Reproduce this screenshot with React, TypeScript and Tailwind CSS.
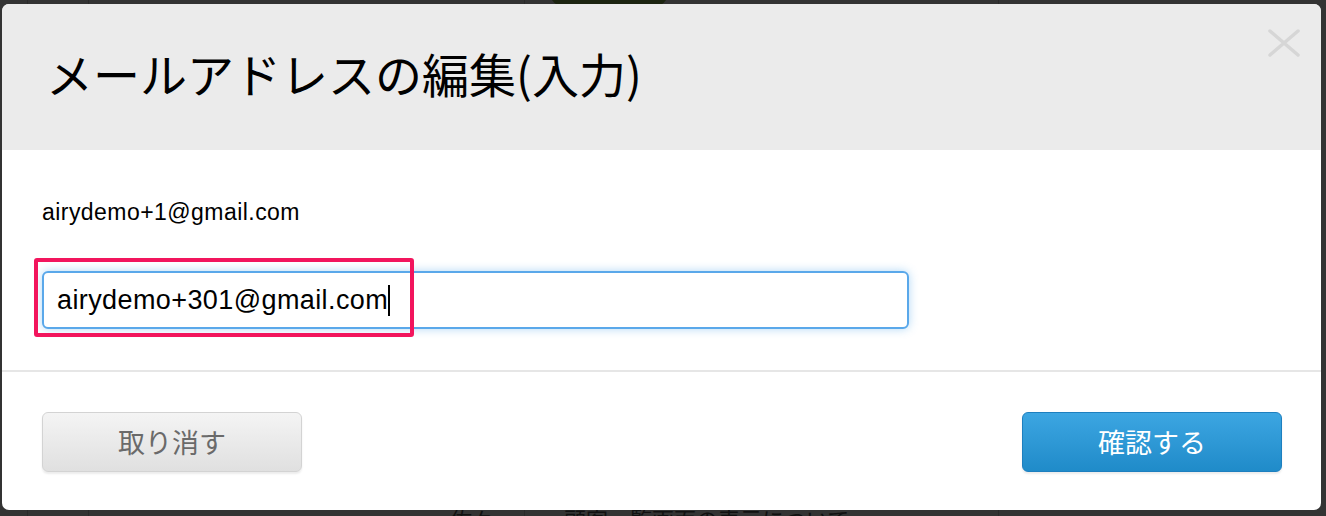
import React from "react";

export default function App() {
  return (
    <div
      className="relative w-[1326px] h-[516px] overflow-hidden bg-[#333333]"
      style={{ fontFamily: '"Liberation Sans", "Noto Sans CJK JP", sans-serif' }}
    >
      {/* faint background page behind overlay */}
      <div className="absolute left-[27px] top-0 h-full w-[1px] bg-[#2a2a2a]" />
      <div className="absolute left-[88px] top-0 h-full w-[1px] bg-[#2a2a2a]" />
      <div className="absolute left-[524px] top-0 h-full w-[1px] bg-[#2a2a2a]" />
      <div className="absolute left-[998px] top-0 h-full w-[1px] bg-[#2a2a2a]" />
      <div className="absolute left-[550px] top-[-20px] h-[26px] w-[118px] rounded-full bg-[#1c2410]" />
      <div className="absolute left-[450px] top-[506px] flex gap-[10px] text-[22px] leading-[30px] text-[#111]">
        <span>佐々</span>
        <span className="ml-[60px]">顧客一覧画面の表示について</span>
      </div>

      <div className="relative ml-[2px] mt-[4px] flex h-[506px] w-[1319px] flex-col overflow-hidden rounded-[7px] bg-white">
        {/* header */}
        <div className="relative flex h-[146px] shrink-0 items-center bg-[#ebebeb] pb-[10px] pl-[44px]">
          <h1
            className="text-[47px] font-normal leading-none text-black"
            style={{ fontFamily: '"Noto Sans CJK JP", sans-serif' }}
          >
            メールアドレスの編集(入力)
          </h1>
          <svg
            className="absolute right-[20px] top-[24px]"
            width="34"
            height="30"
            viewBox="0 0 34 30"
          >
            <path
              d="M3 3 L31 27 M31 3 L3 27"
              stroke="#d6d6d6"
              strokeWidth="3.5"
              strokeLinecap="round"
              fill="none"
            />
          </svg>
        </div>

        {/* body */}
        <div className="relative shrink-0 px-[40px] pt-[47px] pb-[41px]">
          <div className="text-[23px] leading-[30px] tracking-[0.45px] text-black">
            airydemo+1@gmail.com
          </div>
          <div className="mt-[44px] flex h-[58px] w-[867px] items-center rounded-[6px] border-2 border-[#5aa8ea] bg-white pl-[13px] shadow-[0_0_10px_rgba(82,168,236,0.45)]">
            <span className="text-[27px] leading-[34px] tracking-[0.4px] text-black">
              airydemo+301@gmail.com
            </span>
            <span className="inline-block h-[31px] w-[2px] bg-black" />
          </div>
          <div className="absolute left-[32px] top-[108px] h-[79px] w-[380px] rounded-[3px] border-4 border-[#f2155d]" />
        </div>

        <div className="h-[2px] shrink-0 bg-[#e6e6e6]" />

        {/* footer */}
        <div className="flex flex-1 items-start justify-between pl-[40px] pr-[39px] pt-[40px]">
          <button className="flex h-[60px] w-[260px] items-center justify-center rounded-[6px] border border-[#d3d3d3] bg-gradient-to-b from-[#f4f4f4] to-[#e0e0e0] text-[27px] text-[#6a6a6a] shadow-[0_2px_2px_rgba(0,0,0,0.08)]">
            <span style={{ fontFamily: '"Noto Sans CJK JP", sans-serif' }}>取り消す</span>
          </button>
          <button className="flex h-[60px] w-[260px] items-center justify-center rounded-[6px] border border-[#1d7fbf] bg-gradient-to-b from-[#3ca6e2] to-[#1f8bc9] text-[27px] text-white shadow-[0_2px_2px_rgba(0,0,0,0.08)]">
            <span style={{ fontFamily: '"Noto Sans CJK JP", sans-serif' }}>確認する</span>
          </button>
        </div>
      </div>
    </div>
  );
}
